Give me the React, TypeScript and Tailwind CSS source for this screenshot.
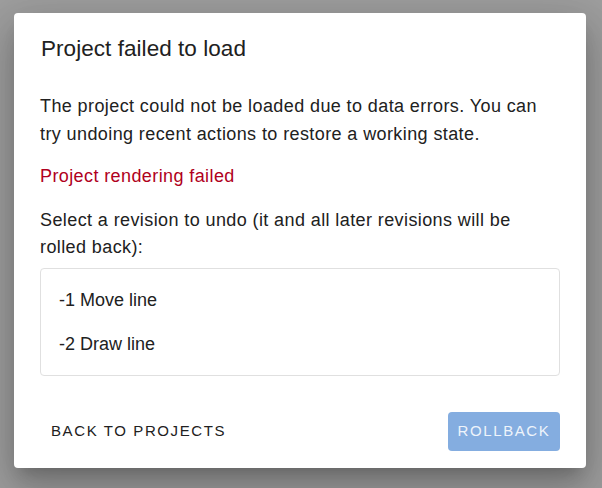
import React from "react";

export default function App() {
  return (
    <div
      className="w-[602px] h-[488px] bg-[#9e9e9e] overflow-hidden pt-[13px] pl-[14px]"
      style={{ fontFamily: '"Liberation Sans", Arial, sans-serif' }}
    >
      <div className="w-[572px] h-[455px] bg-white rounded-[4px] shadow-[0_11px_15px_-7px_rgba(0,0,0,0.2),0_24px_38px_3px_rgba(0,0,0,0.14),0_9px_46px_8px_rgba(0,0,0,0.12)] flex flex-col text-[#212121]">
        <div className="px-[27px] pt-[21px] pb-[18px] text-[22.5px] tracking-[0.05px] leading-[30px]">Project failed to load</div>
        <div className="px-[26px] flex flex-col text-[18px] tracking-[0.4px]">
          <p className="leading-[28px] pt-[10px]">
            The project could not be loaded due to data errors. You can try undoing recent actions to restore a working state.
          </p>
          <p className="leading-[28px] mt-[14px] text-[#b00020]">Project rendering failed</p>
          <p className="leading-[27px] mt-[17px]">
            Select a revision to undo (it and all later revisions will be rolled back):
          </p>
          <div className="mt-[7px] border border-[#e0e0e0] rounded-[4px] py-[9px]">
            <div className="h-[44px] flex items-center px-[18px] tracking-normal">-1 Move line</div>
            <div className="h-[44px] flex items-center px-[18px] tracking-normal">-2 Draw line</div>
          </div>
        </div>
        <div className="mt-auto flex justify-between items-center pl-[27px] pr-[26px] pb-[17px]">
          <button className="h-[39px] px-[10px] text-[15px] tracking-[1.6px] text-[#212121] uppercase">
            Back to projects
          </button>
          <button className="h-[39px] w-[112px] rounded-[4px] bg-[#84ade0] text-[15px] tracking-[1.6px] text-[#eef4fb] uppercase">
            Rollback
          </button>
        </div>
      </div>
    </div>
  );
}
